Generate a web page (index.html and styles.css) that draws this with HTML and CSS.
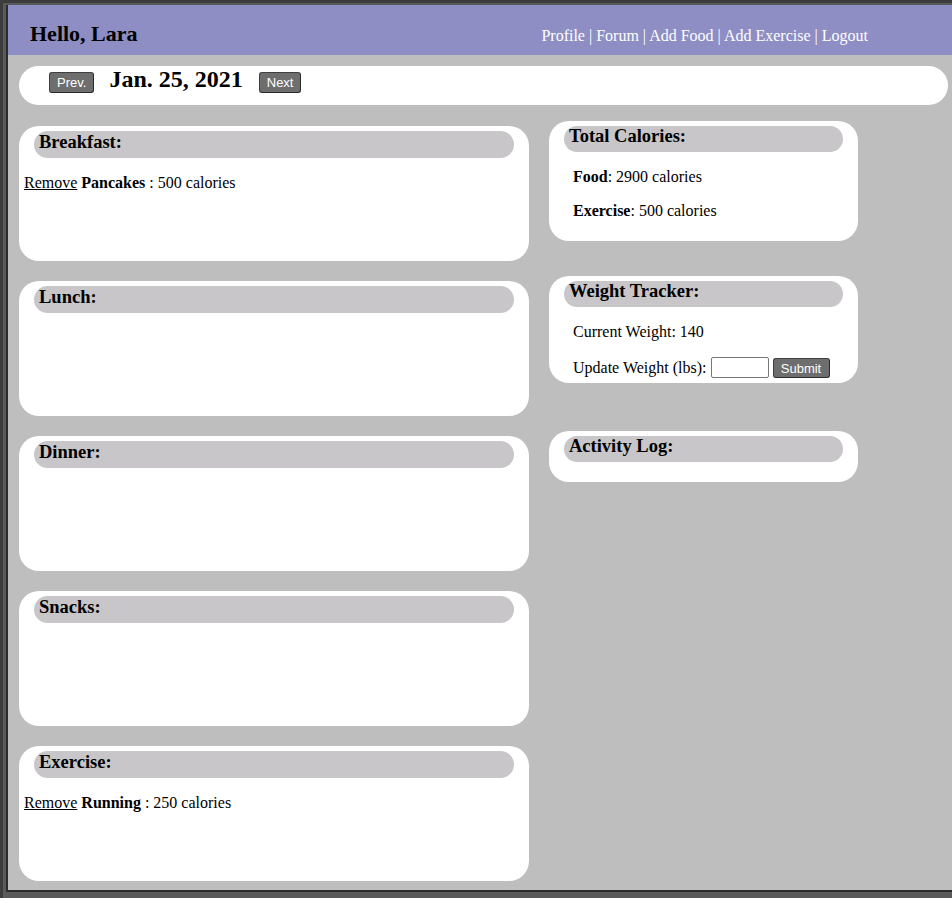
FILE: index.html
```html
<!DOCTYPE html>
<html lang="en">
<head>
<meta charset="utf-8">
<title>Calorie Tracker</title>
<link rel="stylesheet" href="styles.css">
</head>
<body>
<div class="frame">
  <header class="topbar">
    <h1 class="greeting">Hello, Lara</h1>
    <nav class="nav">
      <a href="#">Profile</a> | <a href="#">Forum</a> | <a href="#">Add Food</a> | <a href="#">Add Exercise</a> | <a href="#">Logout</a>
    </nav>
  </header>

  <div class="date-bar">
    <button class="btn">Prev.</button>
    <h2 class="date">Jan. 25, 2021</h2>
    <button class="btn">Next</button>
  </div>

  <div class="columns">
    <div class="col-left">
      <section class="card meal">
        <h3 class="card-title">Breakfast:</h3>
        <p class="item"><a href="#" class="remove">Remove</a> <b>Pancakes</b> : 500 calories</p>
      </section>
      <section class="card meal">
        <h3 class="card-title">Lunch:</h3>
      </section>
      <section class="card meal">
        <h3 class="card-title">Dinner:</h3>
      </section>
      <section class="card meal">
        <h3 class="card-title">Snacks:</h3>
      </section>
      <section class="card meal">
        <h3 class="card-title">Exercise:</h3>
        <p class="item"><a href="#" class="remove">Remove</a> <b>Running</b> : 250 calories</p>
      </section>
    </div>

    <div class="col-right">
      <section class="card side side-total">
        <h3 class="card-title small">Total Calories:</h3>
        <p class="stat"><b>Food</b>: 2900 calories</p>
        <p class="stat"><b>Exercise</b>: 500 calories</p>
      </section>
      <section class="card side side-weight">
        <h3 class="card-title small">Weight Tracker:</h3>
        <p class="stat">Current Weight: 140</p>
        <form class="stat weight-form">
          <label for="w">Update Weight (lbs):</label>
          <input id="w" class="weight-input" type="text">
          <button type="button" class="btn">Submit</button>
        </form>
      </section>
      <section class="card side side-activity">
        <h3 class="card-title small">Activity Log:</h3>
        <div class="activity-body"></div>
      </section>
    </div>
  </div>
</div>
</body>
</html>
```
FILE: styles.css
```css
html {
  height: 100%;
  background: #5a5a5a;
}
body {
  margin: 0;
  height: 898px;
  box-sizing: border-box;
  border-top: 3px solid #3d3d3d;
  border-left: 3px solid #3d3d3d;
  padding: 2px 0 6px 3px;
  background: #5a5a5a;
  font-family: "Liberation Serif", "Times New Roman", serif;
  color: #000;
  overflow: hidden;
}
.frame {
  height: 887px;
  box-sizing: border-box;
  border-left: 2px solid #2c2c2c;
  border-bottom: 2px solid #2c2c2c;
  background: #bebebe;
  overflow: hidden;
}

/* header */
.topbar {
  height: 50px;
  background: #8e8ec4;
  display: flex;
  justify-content: space-between;
  align-items: flex-start;
  padding: 0 84px 0 22px;
}
.greeting {
  margin: 15px 0 0;
  font-size: 22px;
  line-height: 28px;
  font-weight: bold;
}
.nav {
  margin-top: 22px;
  font-size: 16px;
  line-height: 18px;
  color: #fff;
}
.nav a {
  color: #fff;
  text-decoration: none;
}

/* date bar */
.date-bar {
  margin: 11px 4px 0 11px;
  height: 39px;
  background: #fff;
  border-radius: 20px;
  display: flex;
  align-items: flex-start;
  padding-left: 30px;
}
.date-bar .btn {
  margin-top: 6px;
}
.date {
  margin: 1px 16px 0 15px;
  font-size: 24px;
  line-height: 24px;
  font-weight: bold;
}

/* buttons */
.btn {
  font-family: "Liberation Sans", Arial, sans-serif;
  font-size: 13px;
  line-height: 15px;
  color: #fff;
  background: #6e6e6e;
  border: 1px solid #3f3f3f;
  border-right-color: #2a2a2a;
  border-bottom-color: #2a2a2a;
  border-radius: 3px;
  height: 21px;
  padding: 2px 7px;
  box-sizing: border-box;
  cursor: pointer;
}

/* columns */
.columns {
  display: flex;
  align-items: flex-start;
  margin-left: 11px;
}
.col-left {
  width: 510px;
  padding-top: 21px;
}
.col-right {
  width: 309px;
  margin-left: 20px;
  padding-top: 16px;
}

/* cards */
.card {
  background: #fff;
  border-radius: 20px;
  padding: 5px;
  box-sizing: border-box;
}
.meal {
  height: 135px;
  margin-bottom: 20px;
}
.card-title {
  margin: 0 10px;
  height: 27px;
  box-sizing: border-box;
  padding: 0 5px 5px;
  background: #c8c6c8;
  border-radius: 14px;
  font-size: 18.5px;
  line-height: 22px;
  font-weight: bold;
}
.card-title.small {
  height: 26px;
  line-height: 21px;
}
.item {
  margin: 16px 0 0;
  font-size: 16px;
  line-height: 18px;
}
.remove {
  color: #000;
  text-decoration: underline;
}

.stat {
  margin: 16px 0 16px 19px;
  font-size: 16px;
  line-height: 18px;
}
.side-total {
  margin-bottom: 35px;
}
.side-weight {
  margin-bottom: 48px;
}
.weight-form {
  display: flex;
  align-items: center;
  margin-bottom: 0;
  height: 21px;
}
.weight-input {
  width: 58px;
  height: 21px;
  box-sizing: border-box;
  margin: 0 4px;
  border: 1px solid #767676;
  border-radius: 2px;
  padding: 1px 2px;
}
.weight-form .btn {
  width: 57px;
  height: 20px;
  margin-top: 1px;
  font-size: 13px;
}
.activity-body {
  height: 15px;
}
```
